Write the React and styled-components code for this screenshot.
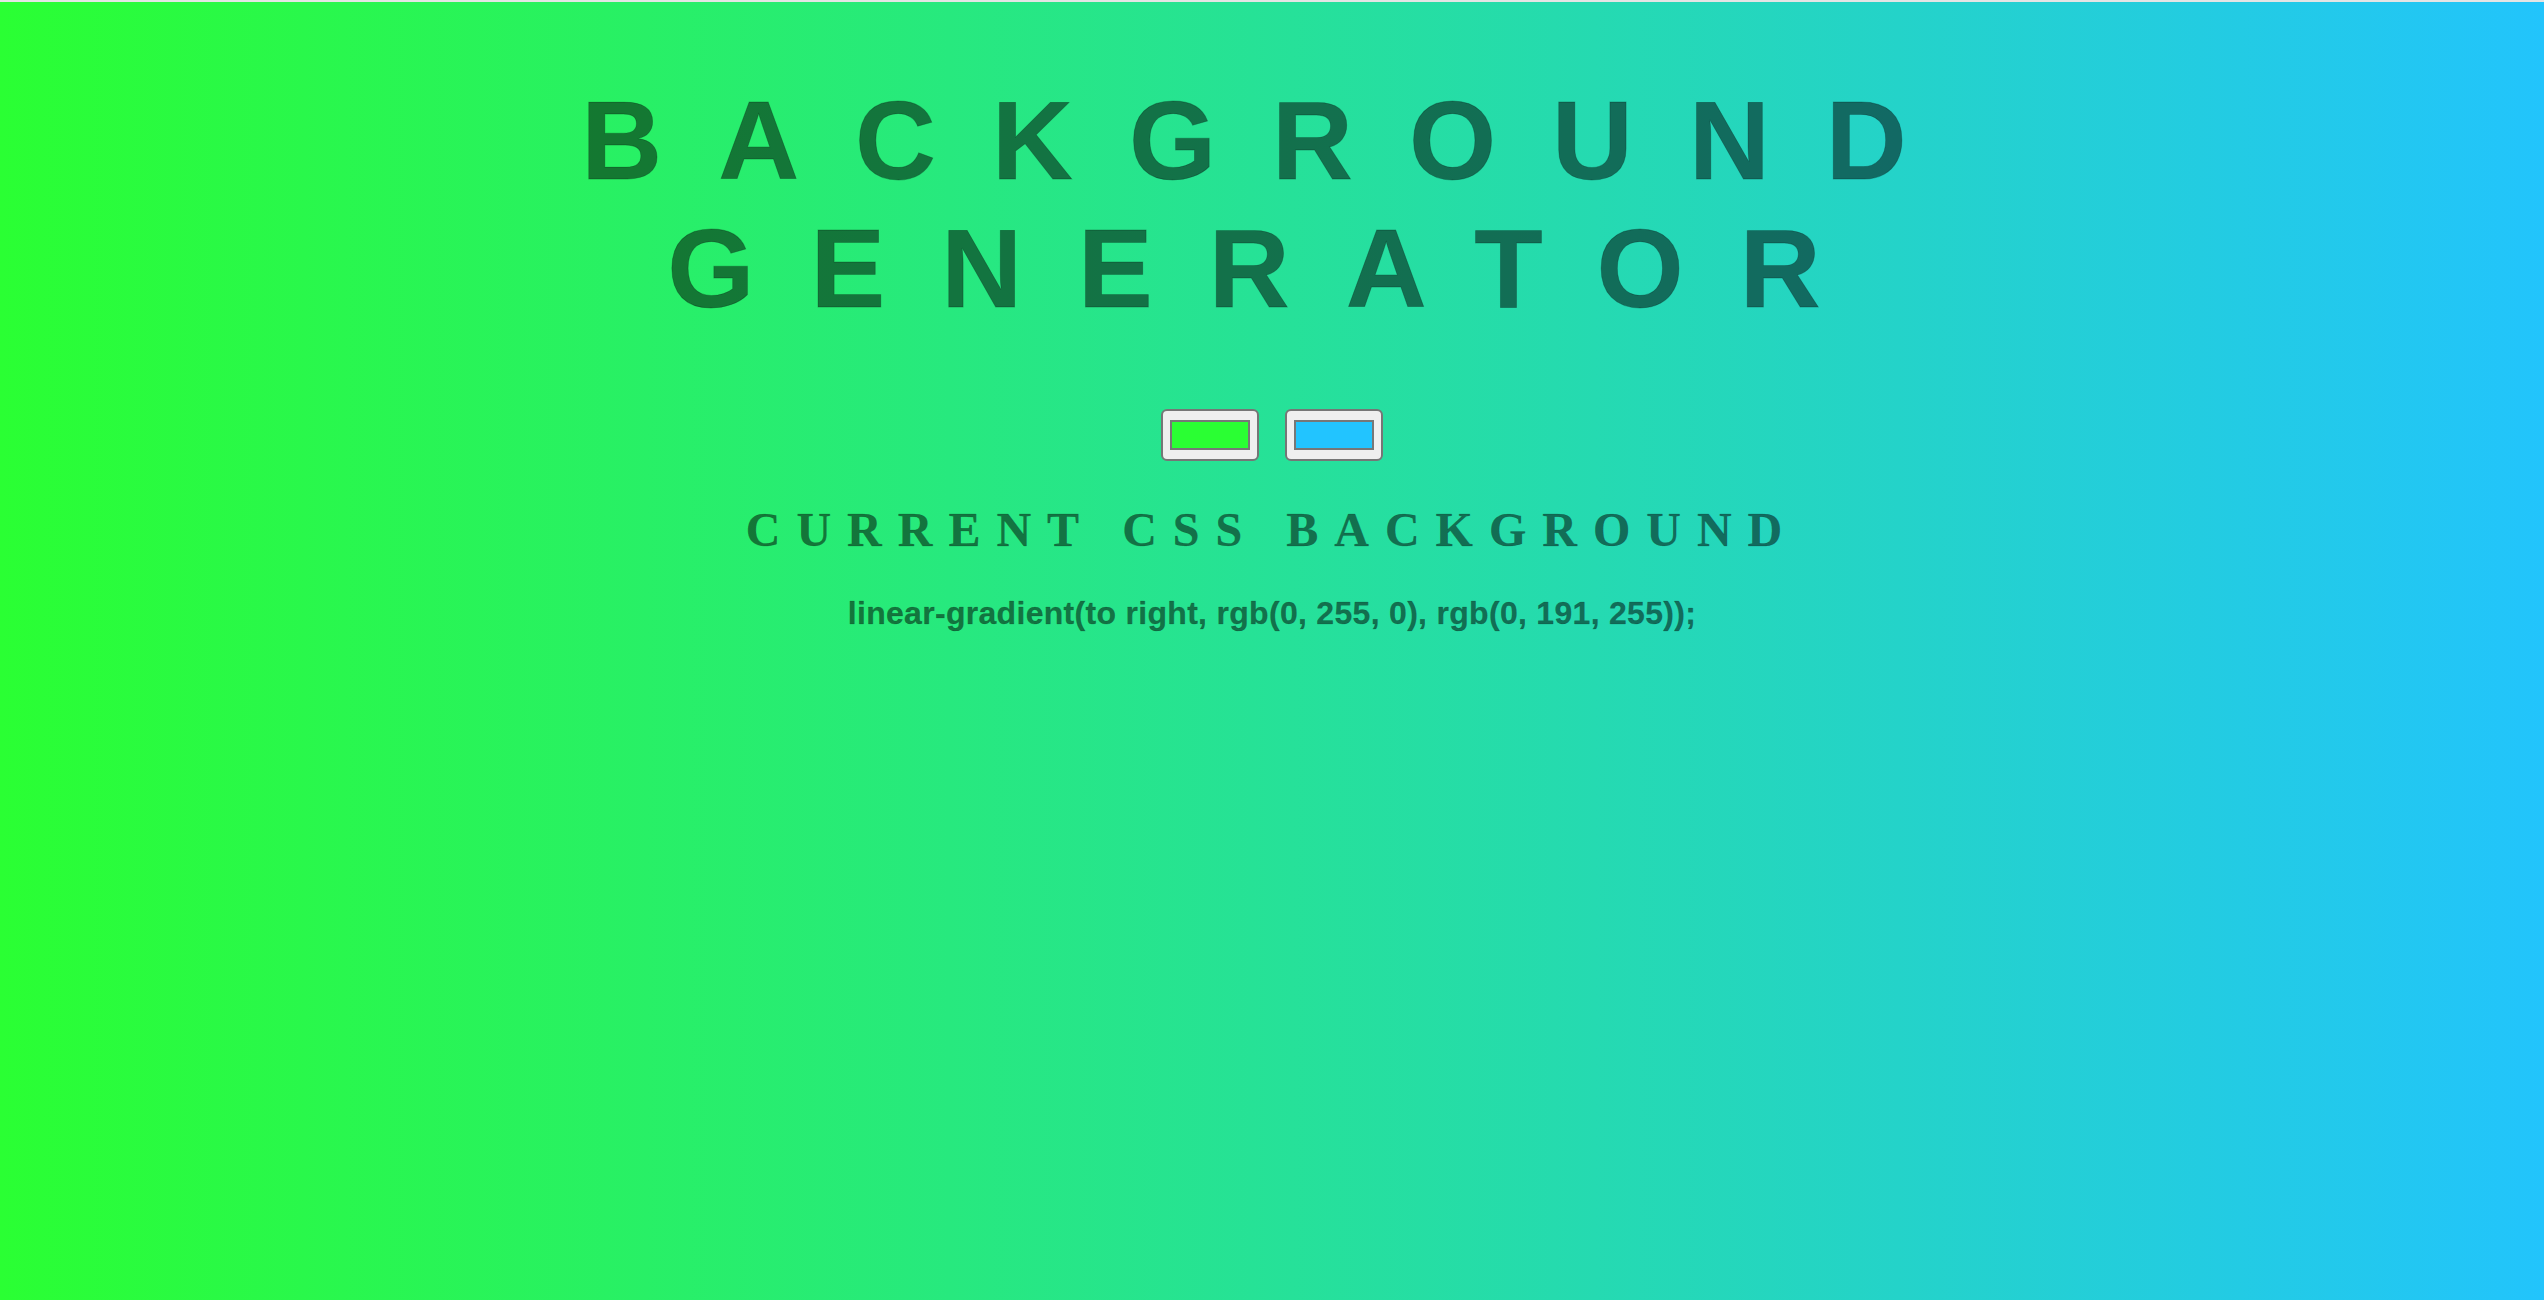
import React from "react";
import styled, { createGlobalStyle } from "styled-components";

const GlobalStyle = createGlobalStyle`
  html, body {
    margin: 0;
    padding: 0;
    height: 100%;
    overflow: hidden;
  }
  body {
    font-family: "Liberation Sans", Arial, sans-serif;
  }
  #root {
    height: 100%;
  }
`;

const Page = styled.main`
  box-sizing: border-box;
  height: 100vh;
  overflow: hidden;
  border-top: 2px solid #e4e4e4;
  padding-top: 75px;
  background: linear-gradient(to right, #2aff33, #22c4fc);
  display: flex;
  flex-direction: column;
  align-items: center;
  text-align: center;
  color: rgba(0, 0, 0, 0.5);
`;

const Title = styled.h1`
  margin: 0;
  font-family: "Liberation Sans", Arial, Helvetica, sans-serif;
  font-weight: 700;
  font-size: 112px;
  line-height: 128px;
  letter-spacing: 56px;
  white-space: nowrap;
  -webkit-text-stroke: 0.8px rgba(0, 0, 0, 0.25);
`;

const TitleLine = styled.span`
  display: block;
`;

const Pickers = styled.div`
  display: flex;
  justify-content: center;
  gap: 26px;
  margin-top: 76px;
`;

const ColorInput = styled.input.attrs({ type: "color" })`
  -webkit-appearance: none;
  appearance: none;
  box-sizing: border-box;
  width: 98px;
  height: 52px;
  margin: 0;
  padding: 0;
  border: 2px solid #767676;
  border-radius: 6px;
  background: #efefef;
  cursor: pointer;

  &::-webkit-color-swatch-wrapper {
    padding: 9px 7px;
  }
  &::-webkit-color-swatch {
    border: 2px solid #777777;
    border-radius: 0;
  }
`;

const Subtitle = styled.h3`
  margin: 41px 0 0;
  font-family: "Liberation Serif", "Times New Roman", serif;
  font-weight: 700;
  font-size: 48px;
  line-height: 56px;
  letter-spacing: 16px;
  -webkit-text-stroke: 0.5px rgba(0, 0, 0, 0.25);
`;

const CssText = styled.p`
  margin: 37px 0 0;
  font-family: "Liberation Sans", Arial, Helvetica, sans-serif;
  font-weight: 700;
  font-size: 32px;
  line-height: 37px;
  letter-spacing: 0.3px;
  -webkit-text-stroke: 0.5px rgba(0, 0, 0, 0.25);
`;

export default function App() {
  return (
    <>
      <GlobalStyle />
      <Page>
        <Title>
          <TitleLine>BACKGROUND</TitleLine>
          <TitleLine>GENERATOR</TitleLine>
        </Title>
        <Pickers>
          <ColorInput defaultValue="#2aff33" name="color1" />
          <ColorInput defaultValue="#22c4ff" name="color2" />
        </Pickers>
        <Subtitle>CURRENT CSS BACKGROUND</Subtitle>
        <CssText>linear-gradient(to right, rgb(0, 255, 0), rgb(0, 191, 255));</CssText>
      </Page>
    </>
  );
}
